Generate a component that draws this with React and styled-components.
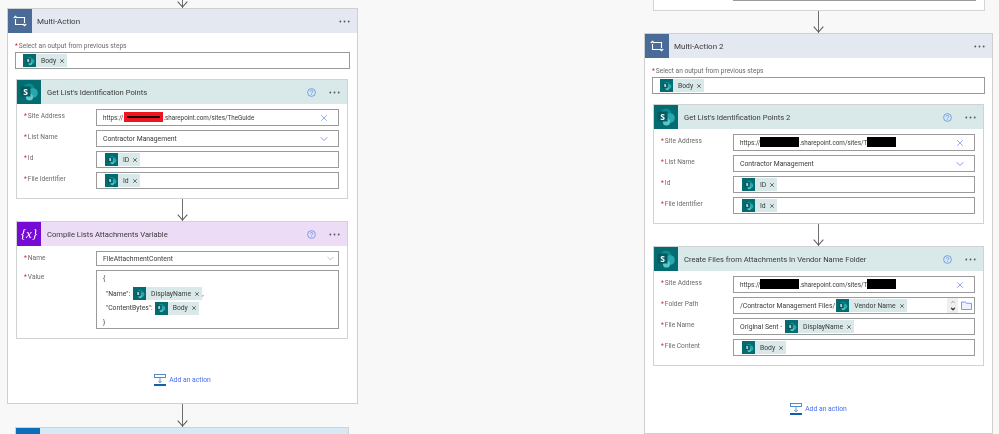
import React from 'react';
import styled, { createGlobalStyle } from 'styled-components';
import { X, ChevronDown, ChevronUp } from 'lucide-react';

const GlobalStyle = createGlobalStyle`
    html, body {
        margin: 0;
        padding: 0;
        background: #f8f8f8;
    }
`;

const Page = styled.div`
    display: flex;
    justify-content: space-between;
    width: 999px;
    height: 434px;
    padding: 0 6px 0 7px;
    box-sizing: border-box;
    overflow: hidden;
    background: #f8f8f8;
    font-family: Roboto, "Liberation Sans", sans-serif;
    color: #333;
    filter: blur(0.3px);
`;

const Column = styled.div`
    display: flex;
    flex-direction: column;
    flex: none;
    width: ${(p) => p.$width}px;
`;

const Line = styled.div`
    position: relative;
    flex: none;
    width: 1px;
    height: ${(p) => p.$height}px;
    margin: 0 auto;
    background: #6e6e6e;

    svg {
        position: absolute;
        left: -5px;
        bottom: 0;
        display: block;
    }
`;

const Stub = styled.div`
    flex: none;
    display: flex;
    justify-content: flex-end;
    height: 10px;
    margin: 0 8px 0 9px;
    padding-right: 8px;
    background: #fff;
    border: 1px solid #d4d4d4;
    border-top: 0;

    i {
        display: block;
        width: 243px;
        height: 1px;
        background: #9a9a9a;
    }
`;

const Scope = styled.section`
    flex: none;
    background: #fff;
    border: 1px solid #cfcfcf;
    padding-bottom: ${(p) => p.$pad}px;
`;

const Head = styled.header`
    display: flex;
    align-items: center;
    height: 24px;
    background: ${(p) => p.$bg};
`;

const IconBox = styled.div`
    display: flex;
    align-items: center;
    justify-content: center;
    flex: none;
    width: 24px;
    height: 24px;
    background: ${(p) => p.$bg};
    color: #fff;
`;

const Title = styled.span`
    flex: 1;
    margin-left: 5px;
    font-size: 8px;
    white-space: nowrap;
    color: #3a3a3a;
`;

const ActionTitle = styled(Title)`
    margin-left: 6px;
    font-size: 7.6px;
`;

const Meta = styled.div`
    display: flex;
    align-items: center;
    gap: 13px;
    margin-right: 7px;
`;

const OutputLabel = styled.div`
    height: 11px;
    margin: 8px 0 0 7px;
    font-size: 6.6px;
    line-height: 11px;
    color: #6a6a6a;
    white-space: nowrap;

    b {
        margin-right: 1px;
        color: #d8232a;
        font-weight: 400;
    }
`;

const OutputInput = styled.div`
    display: flex;
    align-items: center;
    height: 17px;
    margin: 0 7px;
    padding-left: 7px;
    box-sizing: border-box;
    border: 1px solid #9a9a9a;
`;

const Card = styled.div`
    flex: none;
    margin: ${(p) => (p.$flush ? '0' : '10px')} ${(p) => p.$right}px 0 8px;
    background: #fff;
    border: 1px solid #cfd3d3;
`;

const Fields = styled.div`
    display: flex;
    flex-direction: column;
    gap: 4px;
    padding: 5px 8px 9px 7px;
`;

const Row = styled.div`
    display: grid;
    grid-template-columns: 72px 1fr;
`;

const FieldLabel = styled.label`
    font-size: 6.6px;
    line-height: 15px;
    color: #6a6a6a;
    white-space: nowrap;

    b {
        margin-right: 1px;
        color: #d8232a;
        font-weight: 400;
    }
`;

const Input = styled.div`
    display: flex;
    align-items: center;
    height: ${(p) => p.$height || 17}px;
    padding: 0 6px;
    box-sizing: border-box;
    border: 1px solid #9a9a9a;
    font-size: 6.8px;
    color: #3a3a3a;
    white-space: nowrap;
`;

const Address = styled.span`
    display: flex;
    align-items: center;
    font-size: 6.3px;
`;

const InputEnd = styled.span`
    display: flex;
    align-items: center;
    margin-left: auto;
    margin-right: ${(p) => p.$inset}px;
    color: ${(p) => p.$color || '#6f8cf5'};
`;

const Multi = styled.div`
    height: 59px;
    padding: 1px 6px;
    box-sizing: border-box;
    border: 1px solid #9a9a9a;
    font-size: 6.8px;
    color: #3a3a3a;
`;

const MultiLine = styled.div`
    display: flex;
    align-items: center;
    height: 14.5px;
    padding-left: ${(p) => p.$indent || 0}px;
    white-space: nowrap;
`;

const Redact = styled.span`
    position: relative;
    display: inline-block;
    flex: none;
    width: ${(p) => p.$width}px;
    height: 10px;
    margin-top: -2px;
    margin-left: ${(p) => (p.$red ? 1 : 0)}px;
    background: ${(p) => (p.$red ? '#f0141e' : '#000')};

    &::after {
        content: '';
        display: ${(p) => (p.$red ? 'block' : 'none')};
        position: absolute;
        left: 3px;
        right: 3px;
        top: 4px;
        height: 2px;
        background: #1a0000;
    }
`;

const Token = styled.span`
    display: inline-flex;
    align-items: center;
    flex: none;
    height: 13px;
    margin-left: ${(p) => p.$gap || 0}px;
    background: #d9e8e8;
    font-size: 6.8px;
    color: #3a3a3a;
`;

const TokenIcon = styled.span`
    display: flex;
    align-items: center;
    justify-content: center;
    flex: none;
    width: 13px;
    height: 13px;
    background: #036c70;
`;

const TokenText = styled.span`
    margin: 0 3px 0 5px;
    white-space: nowrap;
`;

const Stepper = styled.span`
    display: flex;
    flex-direction: column;
    align-items: center;
    justify-content: center;
    gap: 1px;
    width: 11px;
    height: 15px;
    margin-right: 3px;
    background: #efefef;

    svg {
        display: block;
    }
`;

const AddAction = styled.div`
    display: flex;
    align-items: center;
    justify-content: center;
    gap: 3px;
    height: 16px;
    margin-top: ${(p) => p.$top}px;
    font-size: 6.8px;
    color: #4a6cf0;
`;

const SpGlyph = ({ size }) => (
    <svg width={size} height={size} viewBox="0 0 20 20">
        <circle cx="10" cy="7" r="5.5" fill="#0b8a8f" />
        <circle cx="14" cy="11" r="4.8" fill="#28a8ad" />
        <circle cx="10.5" cy="15" r="3.6" fill="#5cc6ca" />
        <rect x="1.5" y="4.5" width="10" height="10" fill="#045a5e" />
        <text x="6.5" y="12.6" textAnchor="middle" fontSize="8.5" fontWeight="700" fill="#fff" fontFamily="Open Sans, sans-serif">S</text>
    </svg>
);

const LoopGlyph = () => (
    <svg width="14" height="12" viewBox="0 0 14 12" fill="none" stroke="#fff" strokeWidth="1.1">
        <path d="M2.5 4v5.5h9" />
        <path d="M11.5 8V2.5h-9" />
        <path d="M0.8 4.2 2.5 2.4 4.2 4.2" transform="translate(0 -1.2)" />
        <path d="M9.8 7.8l1.7 1.8 1.7-1.8" transform="translate(0 1.2)" />
    </svg>
);

const HelpGlyph = () => (
    <svg width="9" height="9" viewBox="0 0 9 9" fill="none" stroke="#5f8fe6" strokeWidth="0.8">
        <circle cx="4.5" cy="4.5" r="3.9" />
        <path d="M3.2 3.6c0-1.6 2.6-1.6 2.6 0 0 .9-1.3 1-1.3 1.9" />
        <path d="M4.5 6.3v.7" />
    </svg>
);

const DotsGlyph = () => (
    <svg width="11" height="3" viewBox="0 0 11 3" fill="#555">
        <circle cx="1.3" cy="1.5" r="0.9" />
        <circle cx="5.5" cy="1.5" r="0.9" />
        <circle cx="9.7" cy="1.5" r="0.9" />
    </svg>
);

const ArrowHead = () => (
    <svg width="11" height="7" viewBox="0 0 11 7" fill="none" stroke="#5c5c5c" strokeWidth="1.1">
        <path d="M0.7 0.7 5.5 6 10.3 0.7" />
    </svg>
);

const FolderGlyph = () => (
    <svg width="11" height="9" viewBox="0 0 11 9" fill="#eef2ff" stroke="#6f8cf5" strokeWidth="0.9">
        <path d="M0.5 1h4l1 1.3h5v6.2h-10z" />
    </svg>
);

const AddGlyph = () => (
    <svg width="12" height="12" viewBox="0 0 12 12" fill="none">
        <rect x="0.5" y="0.5" width="11" height="3" stroke="#3f7fc4" strokeWidth="0.9" fill="#fff" />
        <path d="M6 3.5v5M4.2 7 6 8.8 7.8 7" stroke="#3f7fc4" strokeWidth="0.8" />
        <rect y="10" width="12" height="2" fill="#0f5fb0" />
    </svg>
);

const Connector = ({ height, plain }) => (
    <Line $height={height}>
        {!plain && <ArrowHead />}
    </Line>
);

const Chip = ({ text, gap }) => (
    <Token $gap={gap}>
        <TokenIcon>
            <SpGlyph size={10} />
        </TokenIcon>
        <TokenText>{text}</TokenText>
        <X size={6} strokeWidth={3} color="#444" style={{ marginRight: 2 }} />
    </Token>
);

const Label = ({ children }) => (
    <FieldLabel>
        <b>*</b>
        {children}
    </FieldLabel>
);

const ClearIcon = () => (
    <InputEnd $inset={3}>
        <X size={10} strokeWidth={1.8} />
    </InputEnd>
);

const ActionHead = ({ bg, iconBg, icon, title }) => (
    <Head $bg={bg}>
        <IconBox $bg={iconBg}>{icon}</IconBox>
        <ActionTitle>{title}</ActionTitle>
        <Meta>
            <HelpGlyph />
            <DotsGlyph />
        </Meta>
    </Head>
);

const SP_HEAD = { bg: '#d9e8e8', iconBg: '#036c70', icon: <SpGlyph size={20} /> };

const ScopeHead = ({ title }) => (
    <Head $bg="#e4e8f0">
        <IconBox $bg="#4a6a97">
            <LoopGlyph />
        </IconBox>
        <Title>{title}</Title>
        <Meta>
            <DotsGlyph />
        </Meta>
    </Head>
);

const OutputField = () => (
    <>
        <OutputLabel>
            <b>*</b>Select an output from previous steps
        </OutputLabel>
        <OutputInput>
            <Chip text="Body" />
        </OutputInput>
    </>
);

const ListFields = ({ address }) => (
    <Fields>
        <Row>
            <Label>Site Address</Label>
            <Input>
                {address}
                <ClearIcon />
            </Input>
        </Row>
        <Row>
            <Label>List Name</Label>
            <Input>
                Contractor Management
                <InputEnd $inset={2}>
                    <ChevronDown size={12} strokeWidth={1.8} />
                </InputEnd>
            </Input>
        </Row>
        <Row>
            <Label>Id</Label>
            <Input>
                <Chip text="ID" gap={2} />
            </Input>
        </Row>
        <Row>
            <Label>File Identifier</Label>
            <Input>
                <Chip text="Id" gap={2} />
            </Input>
        </Row>
    </Fields>
);

const blackAddress = (
    <Address>
        https://
        <Redact $width={39} />
        .sharepoint.com/sites/T
        <Redact $width={29} />
    </Address>
);

function App() {
    return (
        <>
            <GlobalStyle />
            <Page>
                <Column $width={351}>
                    <Connector height={8} />
                    <Scope $pad={15}>
                        <ScopeHead title="Multi-Action" />
                        <OutputField />
                        <Card $right={9}>
                            <ActionHead {...SP_HEAD} title="Get List's Identification Points" />
                            <ListFields
                                address={
                                    <Address>
                                        https://
                                        <Redact $width={39} $red />
                                        .sharepoint.com/sites/TheGuide
                                    </Address>
                                }
                            />
                        </Card>
                        <Connector height={22} />
                        <Card $flush $right={9}>
                            <ActionHead
                                bg="#ecdcf6"
                                iconBg="#770bd6"
                                icon={<span style={{ fontFamily: 'Liberation Serif, serif', fontSize: 13, fontStyle: 'italic' }}>{'{x}'}</span>}
                                title="Compile Lists Attachments Variable"
                            />
                            <Fields>
                                <Row>
                                    <Label>Name</Label>
                                    <Input $height={15}>
                                        FileAttachmentContent
                                        <InputEnd $color="#777" $inset={-4}>
                                            <ChevronDown size={11} strokeWidth={1} />
                                        </InputEnd>
                                    </Input>
                                </Row>
                                <Row>
                                    <Label>Value</Label>
                                    <Multi>
                                        <MultiLine>{'{'}</MultiLine>
                                        <MultiLine $indent={3}>
                                            "Name":
                                            <Chip text="DisplayName" gap={3} />,
                                        </MultiLine>
                                        <MultiLine $indent={3}>
                                            "ContentBytes":
                                            <Chip text="Body" gap={2} />
                                        </MultiLine>
                                        <MultiLine>{'}'}</MultiLine>
                                    </Multi>
                                </Row>
                            </Fields>
                        </Card>
                        <AddAction $top={33}>
                            <AddGlyph />
                            Add an action
                        </AddAction>
                    </Scope>
                    <Connector height={23} />
                    <Card $flush $right={9}>
                        <Head $bg="#d8e9f6">
                            <IconBox $bg="#0a6ebd" />
                        </Head>
                    </Card>
                </Column>

                <Column $width={349}>
                    <Stub>
                        <i />
                    </Stub>
                    <Connector height={22} />
                    <Scope $pad={16}>
                        <ScopeHead title="Multi-Action 2" />
                        <OutputField />
                        <Card $right={8}>
                            <ActionHead {...SP_HEAD} title="Get List's Identification Points 2" />
                            <ListFields address={blackAddress} />
                        </Card>
                        <Connector height={22} />
                        <Card $flush $right={8}>
                            <ActionHead {...SP_HEAD} title="Create Files from Attachments In Vendor Name Folder" />
                            <Fields>
                                <Row>
                                    <Label>Site Address</Label>
                                    <Input>
                                        {blackAddress}
                                        <ClearIcon />
                                    </Input>
                                </Row>
                                <Row>
                                    <Label>Folder Path</Label>
                                    <Input>
                                        /Contractor Management Files/
                                        <Chip text="Vendor Name" gap={1} />
                                        <InputEnd $inset={-4}>
                                            <Stepper>
                                                <ChevronUp size={6} strokeWidth={3.5} color="#999" />
                                                <ChevronDown size={6} strokeWidth={5} color="#333" />
                                            </Stepper>
                                            <FolderGlyph />
                                        </InputEnd>
                                    </Input>
                                </Row>
                                <Row>
                                    <Label>File Name</Label>
                                    <Input>
                                        Original Sent -
                                        <Chip text="DisplayName" gap={3} />
                                    </Input>
                                </Row>
                                <Row>
                                    <Label>File Content</Label>
                                    <Input>
                                        <Chip text="Body" gap={2} />
                                    </Input>
                                </Row>
                            </Fields>
                        </Card>
                        <AddAction $top={35}>
                            <AddGlyph />
                            Add an action
                        </AddAction>
                    </Scope>
                    <Connector height={4} plain />
                </Column>
            </Page>
        </>
    );
}

export default App;
